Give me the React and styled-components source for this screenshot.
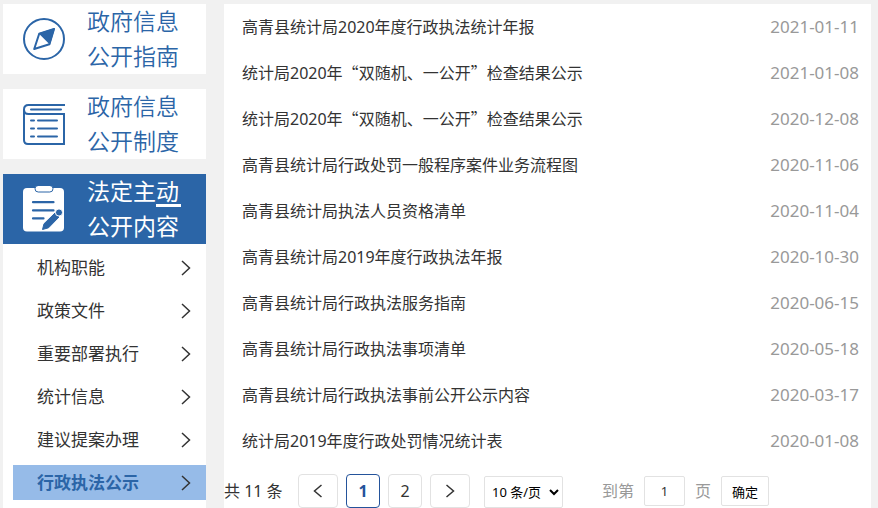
import React, { useState } from "react";
import styled, { createGlobalStyle } from "styled-components";

const GlobalStyle = createGlobalStyle`
  * {
    box-sizing: border-box;
  }

  body {
    margin: 0;
    background: #f1f1f1;
    color: #333;
    font-family: "Noto Sans", "Noto Sans CJK SC", sans-serif;
    font-size: 16px;
  }

  button,
  input,
  select {
    font-family: inherit;
  }

  a {
    color: inherit;
    text-decoration: none;
  }
`;

const Page = styled.div`
  display: flex;
  gap: 18px;
  min-height: 100vh;
  padding: 4px 7px 0 3px;
`;

const Sidebar = styled.aside`
  display: flex;
  flex: 0 0 203px;
  flex-direction: column;
`;

const Card = styled.a`
  display: flex;
  align-items: center;
  gap: 22px;
  height: 70px;
  margin-bottom: ${({ $active }) => ($active ? "0" : "15px")};
  padding-left: 20px;
  background: ${({ $active }) => ($active ? "#2b65a7" : "#fff")};
  color: ${({ $active }) => ($active ? "#fff" : "#2b65a7")};

  svg {
    flex: none;
  }
`;

const CardText = styled.span`
  padding-bottom: 2px;
  font-size: 23px;
  font-weight: ${({ $active }) => ($active ? "400" : "350")};
  font-family: "Noto Sans CJK SC", sans-serif;
  line-height: 35px;
`;

const Marked = styled.span`
  position: relative;

  &::after {
    content: "";
    position: absolute;
    right: -2px;
    bottom: 0;
    width: 25px;
    height: 3px;
    background: #fff;
  }
`;

const Menu = styled.ul`
  display: flex;
  flex: 1;
  flex-direction: column;
  gap: 8px;
  margin: 0;
  padding: 6px 0 0 10px;
  background: #fff;
  list-style: none;
`;

const MenuLink = styled.a`
  display: flex;
  align-items: center;
  justify-content: space-between;
  height: 35px;
  padding: 0 15px 0 24px;
  background: ${({ $active }) => ($active ? "#96bbe8" : "transparent")};

  span {
    color: ${({ $active }) => ($active ? "#2b65a7" : "#333")};
    font-size: 17px;
    font-weight: ${({ $active }) => ($active ? "700" : "400")};
    line-height: 35px;
  }
`;

const Main = styled.main`
  flex: 1;
  min-width: 0;
  background: #fff;
`;

const List = styled.ul`
  margin: 0;
  padding: 0 12px 0 18px;
  list-style: none;
`;

const ListItem = styled.li`
  display: flex;
  justify-content: space-between;
  height: 46px;
  line-height: 46px;
`;

const Quote = styled.span`
  font-family: "Noto Sans CJK SC", sans-serif;
  line-height: 1;
`;

const DateText = styled.time`
  color: #999;
  font-size: 17px;
`;

const Pagination = styled.nav`
  display: flex;
  align-items: flex-start;
  margin-top: 10px;
  line-height: 34px;
`;

const Total = styled.span`
  width: 74px;
`;

const PageButton = styled.button`
  display: flex;
  align-items: center;
  justify-content: center;
  width: ${({ $wide }) => ($wide ? "40px" : "34px")};
  height: 34px;
  margin-right: 8px;
  padding: 0;
  border: 1px solid ${({ $active }) => ($active ? "#24539b" : "#e2e2e2")};
  border-radius: 4px;
  background: #fff;
  color: ${({ $active }) => ($active ? "#24539b" : "#333")};
  font-size: 16px;
  font-weight: ${({ $active }) => ($active ? "700" : "400")};
`;

const PageSize = styled.select`
  width: 79px;
  height: 32px;
  margin: 2px 39px 0 6px;
  padding: 0 3px;
  border: 1px solid #e2e2e2;
  border-radius: 2px;
  background: #fff;
  color: #000;
  font-size: 13px;
`;

const Jump = styled.form`
  display: flex;
  align-items: flex-start;
  gap: 10px;
  color: #999;
`;

const JumpInput = styled.input`
  width: 41px;
  height: 30px;
  margin: 2px 0 0;
  padding: 0;
  border: 1px solid #e2e2e2;
  border-radius: 2px;
  color: #333;
  font-size: 13px;
  text-align: center;
`;

const JumpButton = styled.button`
  width: 48px;
  height: 30px;
  margin: 2px 0 0;
  padding: 0;
  border: 1px solid #e2e2e2;
  border-radius: 2px;
  background: #fff;
  color: #000;
  font-size: 13px;
`;

const CompassIcon = () => (
  <svg width="42" height="42" viewBox="0 0 42 42" fill="none" stroke="currentColor" strokeWidth="2" aria-hidden="true">
    <circle cx="21" cy="21" r="20" />
    <path d="M31 11 16.2 15.8 11.2 31 26.4 26.2Z" strokeLinejoin="round" />
    <path d="M32 10 15.5 15.2 27 26.8Z" fill="currentColor" stroke="none" />
  </svg>
);

const BookIcon = () => (
  <svg width="42" height="42" viewBox="0 0 42 42" fill="none" stroke="currentColor" strokeWidth="2" aria-hidden="true">
    <path d="M42 2H5.5Q1 2 1 6.5V37q0 4 4 4H41V11H5.5Q1 11 1 6.5" />
    <path d="M8 6.5h30M8 17.5h3m4 0h19M8 25.5h3m4 0h19M8 33.5h3m4 0h19" strokeLinecap="round" />
  </svg>
);

const ClipboardIcon = () => (
  <svg width="42" height="46" viewBox="0 0 42 46" aria-hidden="true">
    <rect x="0" y="2" width="41" height="43.5" rx="4" fill="#fff" />
    <rect x="12" y="-0.5" width="18" height="6.5" rx="3.2" fill="#fff" stroke="#2b65a7" strokeWidth="1" />
    <path d="M10 16.2h20.5M10 24.4h20.5M10 32.4h10.5" stroke="#2b65a7" strokeWidth="2.2" strokeLinecap="round" />
    <path
      d="M32 27 36 31 25.5 41.8 19.5 43.5 21 37.8Z"
      fill="#2b65a7"
      stroke="#2b65a7"
      strokeWidth="1"
      strokeLinejoin="round"
    />
    <circle cx="36" cy="26.5" r="3.6" fill="#2b65a7" stroke="#fff" strokeWidth="1" />
  </svg>
);

const ArrowIcon = ({ left, small }) => (
  <svg
    width={small ? 10 : 10}
    height={small ? 14 : 16}
    viewBox={small ? "0 0 10 14" : "0 0 10 16"}
    fill="none"
    stroke="#333"
    strokeWidth="1.5"
    aria-hidden="true"
  >
    {small ? (
      <path d={left ? "M8.5 1 1.5 7l7 6" : "M1.5 1l7 6-7 6"} />
    ) : (
      <path d="M1 1 8.5 8 1 15" />
    )}
  </svg>
);

const menu = ["机构职能", "政策文件", "重要部署执行", "统计信息", "建议提案办理", "行政执法公示"];

const articles = [
  { title: "高青县统计局2020年度行政执法统计年报", date: "2021-01-11" },
  { title: "统计局2020年“双随机、一公开”检查结果公示", date: "2021-01-08" },
  { title: "统计局2020年“双随机、一公开”检查结果公示", date: "2020-12-08" },
  { title: "高青县统计局行政处罚一般程序案件业务流程图", date: "2020-11-06" },
  { title: "高青县统计局执法人员资格清单", date: "2020-11-04" },
  { title: "高青县统计局2019年度行政执法年报", date: "2020-10-30" },
  { title: "高青县统计局行政执法服务指南", date: "2020-06-15" },
  { title: "高青县统计局行政执法事项清单", date: "2020-05-18" },
  { title: "高青县统计局行政执法事前公开公示内容", date: "2020-03-17" },
  { title: "统计局2019年度行政处罚情况统计表", date: "2020-01-08" },
];

// Chinese quotes need the full-width glyphs of the CJK font
const renderTitle = (title) =>
  title.split(/([“”])/).map((part, i) =>
    part === "“" || part === "”" ? <Quote key={i}>{part}</Quote> : part
  );

const App = () => {
  const [page, setPage] = useState(1);
  const [target, setTarget] = useState("1");

  const goTo = (n) => setPage(Math.min(2, Math.max(1, n)));

  const handleJump = (e) => {
    e.preventDefault();
    goTo(Number(target) || 1);
  };

  return (
    <>
      <GlobalStyle />
      <Page lang="zh-CN">
        <Sidebar>
          <Card href="#guide">
            <CompassIcon />
            <CardText>政府信息<br />公开指南</CardText>
          </Card>
          <Card href="#system">
            <BookIcon />
            <CardText>政府信息<br />公开制度</CardText>
          </Card>
          <Card href="#content" $active>
            <ClipboardIcon />
            <CardText $active>法定主<Marked>动</Marked><br />公开内容</CardText>
          </Card>
          <Menu>
            {menu.map((name) => (
              <li key={name}>
                <MenuLink href="#list" $active={name === "行政执法公示"}>
                  <span>{name}</span>
                  <ArrowIcon />
                </MenuLink>
              </li>
            ))}
          </Menu>
        </Sidebar>
        <Main>
          <List>
            {articles.map((article) => (
              <ListItem key={article.date}>
                <a href="#article">{renderTitle(article.title)}</a>
                <DateText>{article.date}</DateText>
              </ListItem>
            ))}
          </List>
          <Pagination>
            <Total>共 11 条</Total>
            <PageButton $wide aria-label="上一页" onClick={() => goTo(page - 1)}>
              <ArrowIcon left small />
            </PageButton>
            {[1, 2].map((n) => (
              <PageButton key={n} $active={n === page} onClick={() => goTo(n)}>
                {n}
              </PageButton>
            ))}
            <PageButton $wide aria-label="下一页" onClick={() => goTo(page + 1)}>
              <ArrowIcon small />
            </PageButton>
            <PageSize aria-label="每页条数">
              <option>10 条/页</option>
              <option>20 条/页</option>
            </PageSize>
            <Jump onSubmit={handleJump}>
              <label htmlFor="jump">到第</label>
              <JumpInput id="jump" value={target} onChange={(e) => setTarget(e.target.value)} />
              <span>页</span>
              <JumpButton type="submit">确定</JumpButton>
            </Jump>
          </Pagination>
        </Main>
      </Page>
    </>
  );
};

export default App;
